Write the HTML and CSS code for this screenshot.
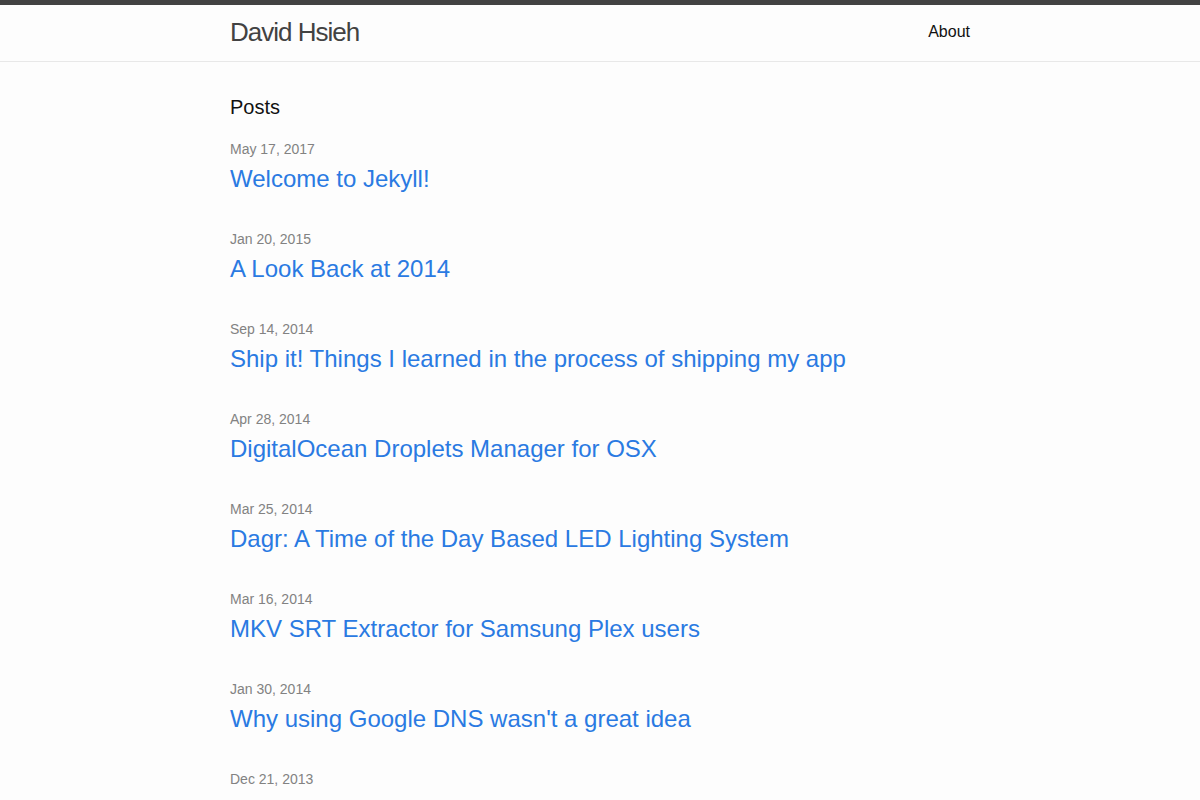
FILE: index.html
```html
<!DOCTYPE html>
<html lang="en">
<head>
<meta charset="utf-8">
<title>David Hsieh</title>
<link rel="stylesheet" href="styles.css">
</head>
<body>
<header class="site-header">
  <div class="wrapper header-row">
    <a class="site-title" href="#">David Hsieh</a>
    <nav class="site-nav">
      <a class="page-link" href="#">About</a>
    </nav>
  </div>
</header>
<main class="page-content">
  <div class="wrapper">
    <h2 class="post-list-heading">Posts</h2>
    <ul class="post-list">
      <li><span class="post-meta">May 17, 2017</span><h2 class="post-title"><a class="post-link" href="#">Welcome to Jekyll!</a></h2></li>
      <li><span class="post-meta">Jan 20, 2015</span><h2 class="post-title"><a class="post-link" href="#">A Look Back at 2014</a></h2></li>
      <li><span class="post-meta">Sep 14, 2014</span><h2 class="post-title"><a class="post-link" href="#">Ship it! Things I learned in the process of shipping my app</a></h2></li>
      <li><span class="post-meta">Apr 28, 2014</span><h2 class="post-title"><a class="post-link" href="#">DigitalOcean Droplets Manager for OSX</a></h2></li>
      <li><span class="post-meta">Mar 25, 2014</span><h2 class="post-title"><a class="post-link" href="#">Dagr: A Time of the Day Based LED Lighting System</a></h2></li>
      <li><span class="post-meta">Mar 16, 2014</span><h2 class="post-title"><a class="post-link" href="#">MKV SRT Extractor for Samsung Plex users</a></h2></li>
      <li><span class="post-meta">Jan 30, 2014</span><h2 class="post-title"><a class="post-link" href="#">Why using Google DNS wasn't a great idea</a></h2></li>
      <li><span class="post-meta">Dec 21, 2013</span></li>
    </ul>
  </div>
</main>
</body>
</html>
```

FILE: styles.css
```css
* { box-sizing: border-box; }
html, body { margin: 0; padding: 0; }
body {
  font-family: "Liberation Sans", Arial, Helvetica, sans-serif;
  font-size: 16px;
  line-height: 1.5;
  color: #111111;
  background: #fdfdfd;
}
a { text-decoration: none; }
.wrapper {
  max-width: 740px;
  margin: 0 auto;
}
.site-header {
  border-top: 5px solid #424242;
  border-bottom: 1px solid #e8e8e8;
  min-height: 62px;
}
.header-row {
  display: flex;
  justify-content: space-between;
  align-items: flex-start;
}
.site-title {
  font-size: 26px;
  font-weight: 300;
  line-height: 54px;
  letter-spacing: -1px;
  color: #424242;
}
.site-nav { line-height: 54px; }
.page-link { color: #111111; }
.page-content { padding: 30px 0; }
.post-list-heading {
  font-size: 20px;
  font-weight: 400;
  margin: 0 0 15px;
}
.post-list {
  list-style: none;
  margin: 0;
  padding: 0;
}
.post-list li { margin-bottom: 30px; }
.post-meta {
  font-size: 14px;
  color: #828282;
}
.post-title {
  font-size: 24px;
  font-weight: 400;
  margin: 0 0 15px;
}
.post-link { color: #2a7ae2; }
```
